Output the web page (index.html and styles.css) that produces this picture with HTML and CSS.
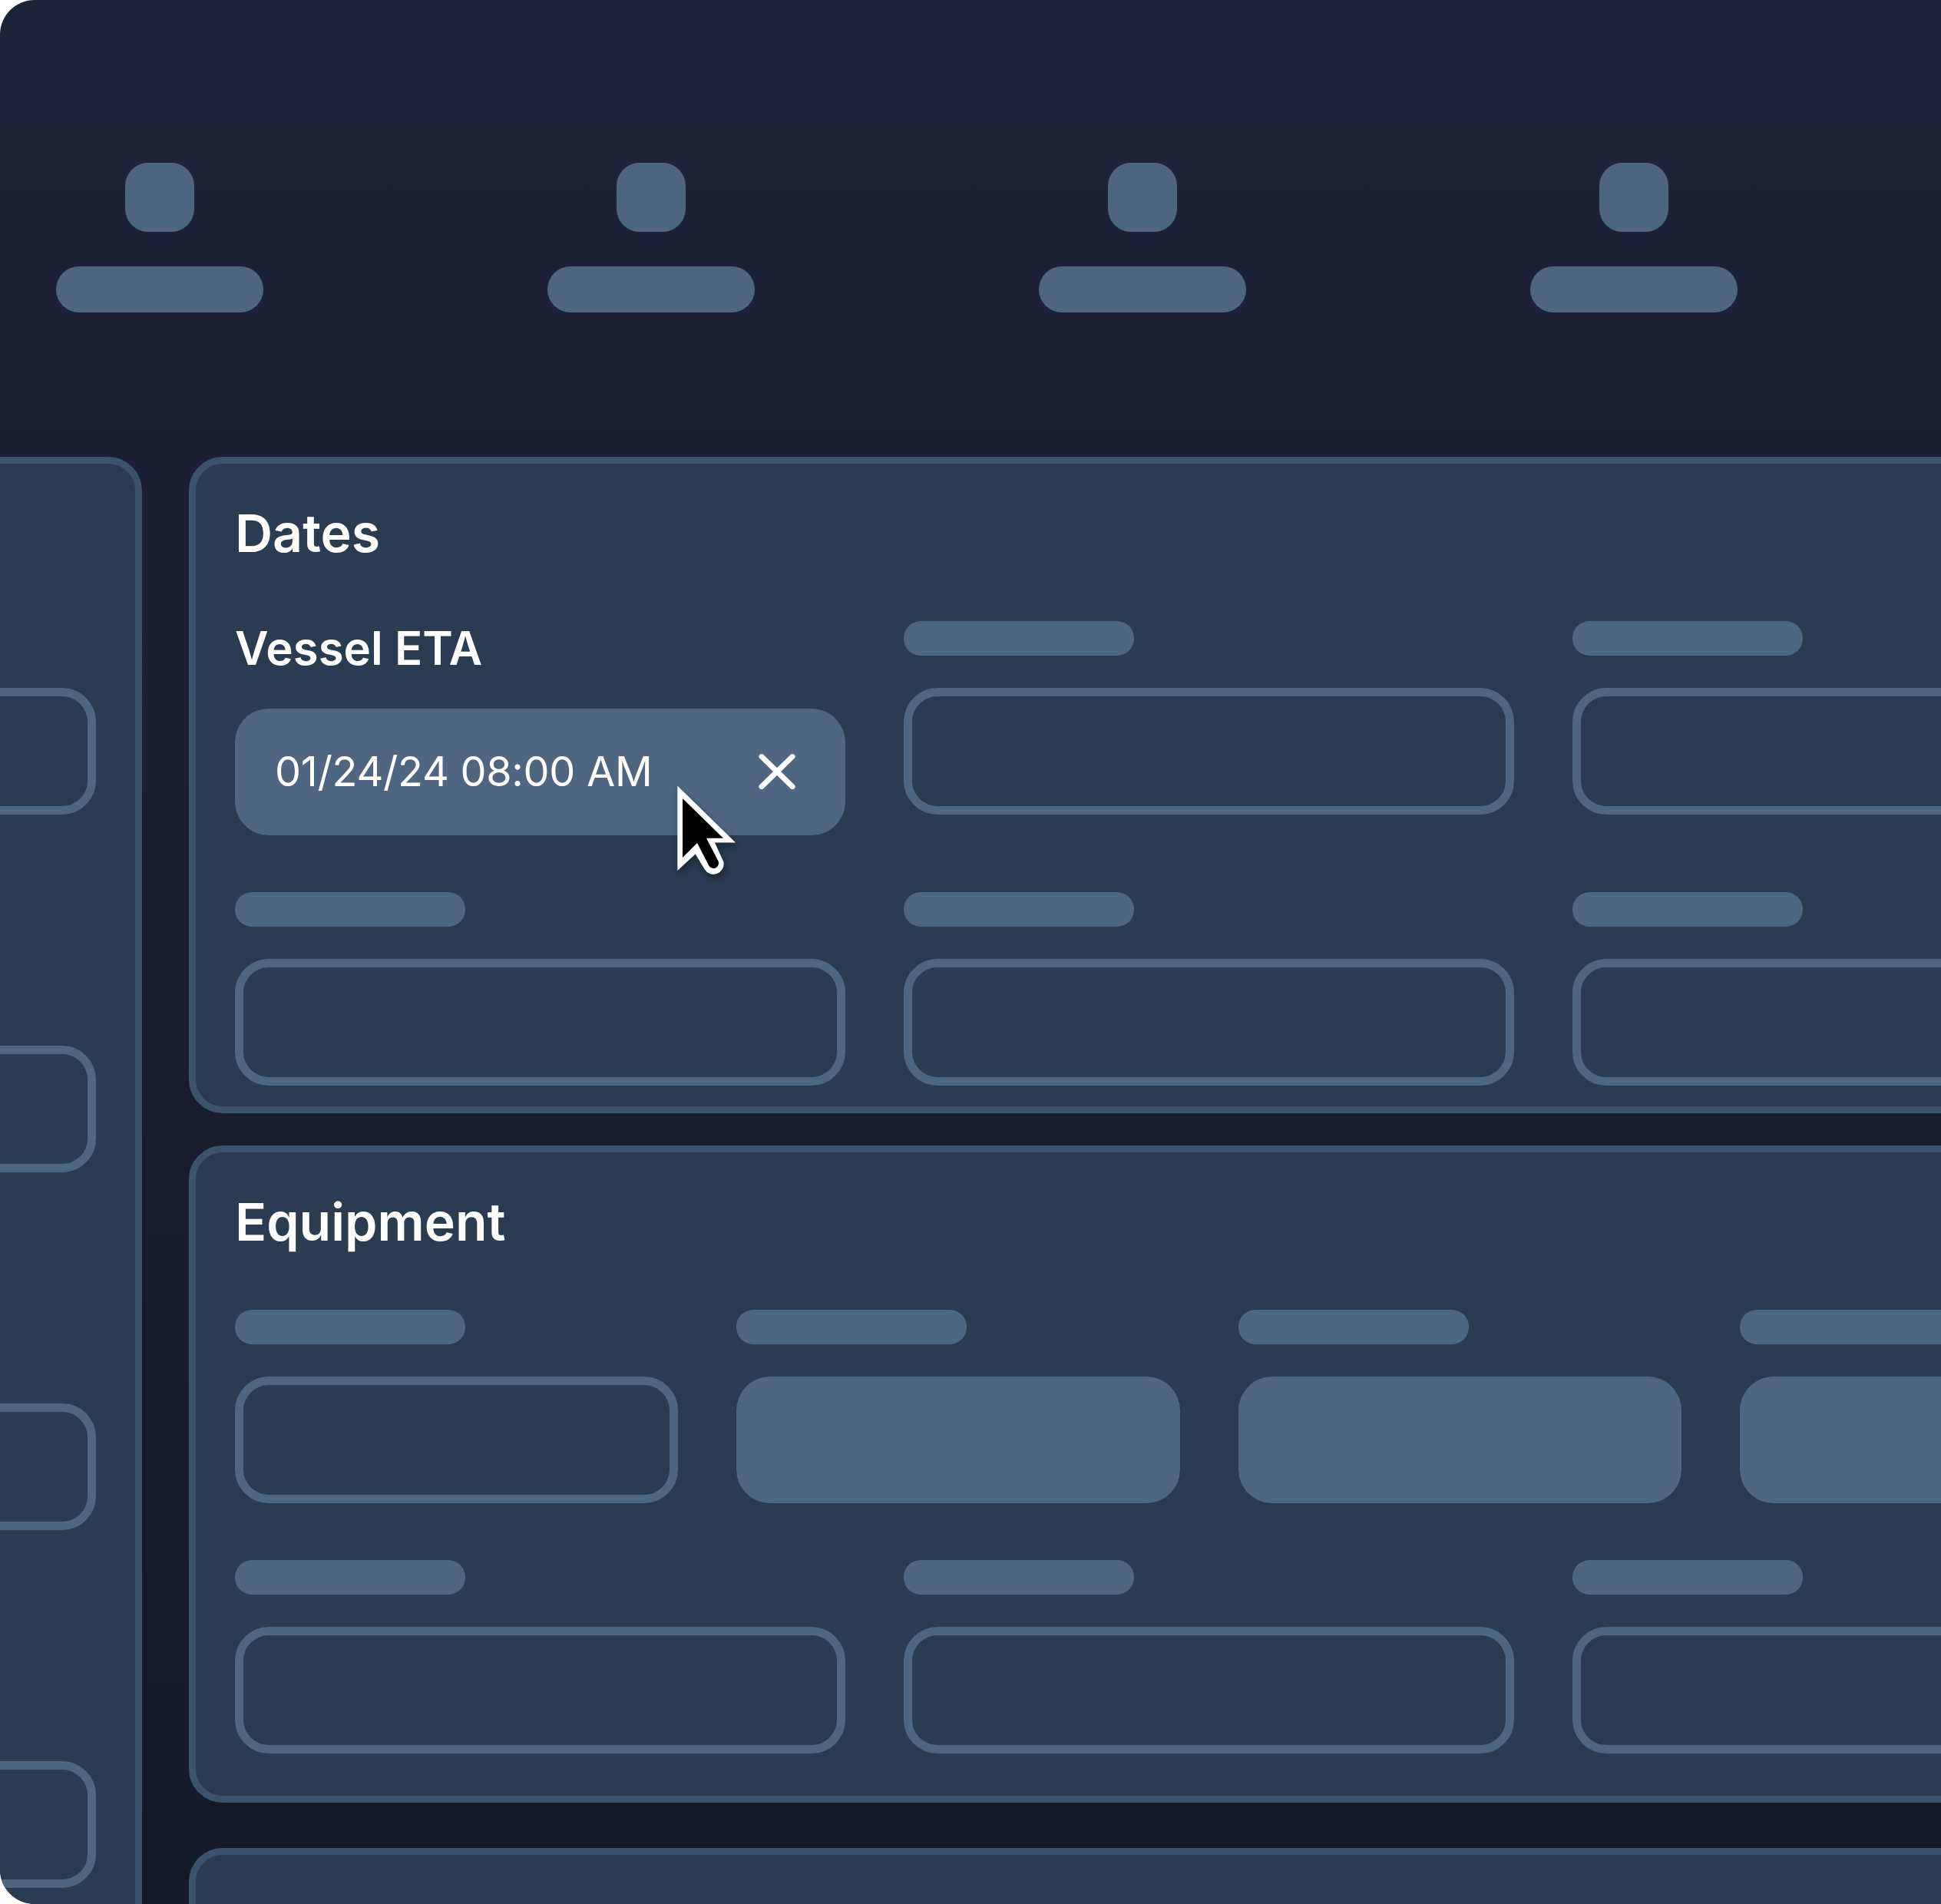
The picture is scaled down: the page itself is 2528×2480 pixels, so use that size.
FILE: index.html
```html
<!DOCTYPE html>
<html lang="en">
<head>
  <meta charset="UTF-8" />
  <title>Shipment details</title>
  <link rel="stylesheet" href="styles.css">
</head>
<body>
  <div class="frame">
    <div class="steps">
      <div class="step"><div class="step-icon"></div><div class="step-bar"></div></div>
      <div class="step"><div class="step-icon"></div><div class="step-bar"></div></div>
      <div class="step"><div class="step-icon"></div><div class="step-bar"></div></div>
      <div class="step"><div class="step-icon"></div><div class="step-bar"></div></div>
    </div>

    <div class="content">
      <div class="panel side">
        <div class="field-outline"></div>
        <div class="field-outline"></div>
        <div class="field-outline"></div>
        <div class="field-outline"></div>
      </div>

      <div class="main">
        <div class="panel panel-dates">
          <h2>Dates</h2>
          <div class="row row-3">
            <div class="col">
              <div class="label-text">Vessel ETA</div>
              <div class="field-chip">
                <span>01/24/24 08:00 AM</span>
                <svg class="clear-icon" viewBox="0 0 48 46" width="48" height="46">
                  <path d="M4 3.5 44 42.5M44 3.5 4 42.5" />
                </svg>
                <svg class="cursor" viewBox="0 0 140 170" width="140" height="170">
                  <path class="cursor-edge" d="M42.3 43.5V154L65.7 132.5 77.5 152A13.5 13.5 0 0 0 102.5 143L91 117.5H118Z" />
                  <path class="cursor-fill" d="M49 60V137L68 118 83 147A6.8 6.8 0 0 0 95.5 141.5L80 111.7H102Z" />
                </svg>
              </div>
            </div>
            <div class="col"><div class="label-bar"></div><div class="field-outline"></div></div>
            <div class="col"><div class="label-bar"></div><div class="field-outline"></div></div>
          </div>
          <div class="row row-3">
            <div class="col"><div class="label-bar"></div><div class="field-outline"></div></div>
            <div class="col"><div class="label-bar"></div><div class="field-outline"></div></div>
            <div class="col"><div class="label-bar"></div><div class="field-outline"></div></div>
          </div>
        </div>

        <div class="panel panel-equipment">
          <h2>Equipment</h2>
          <div class="row row-4">
            <div class="col"><div class="label-bar"></div><div class="field-outline"></div></div>
            <div class="col"><div class="label-bar"></div><div class="field-solid"></div></div>
            <div class="col"><div class="label-bar"></div><div class="field-solid"></div></div>
            <div class="col"><div class="label-bar"></div><div class="field-solid"></div></div>
          </div>
          <div class="row row-3">
            <div class="col"><div class="label-bar"></div><div class="field-outline"></div></div>
            <div class="col"><div class="label-bar"></div><div class="field-outline"></div></div>
            <div class="col"><div class="label-bar"></div><div class="field-outline"></div></div>
          </div>
        </div>

        <div class="panel panel-last"></div>
      </div>
    </div>
  </div>
</body>
</html>
```

FILE: styles.css
```css
* { box-sizing: border-box; }
body { margin: 0; background: #ffffff; font-family: 'Inter', sans-serif; }

.frame {
  width: 2528px; height: 2480px; overflow: hidden;
  border-radius: 45px 0 0 45px;
  background: linear-gradient(180deg, #1d2439 0%, #1a2033 30%, #131a28 100%);
}

.steps { display: flex; gap: 370px; height: 595px; padding: 212px 0 0 73px; }
.step { display: flex; flex-direction: column; align-items: center; gap: 45px; width: 270px; }
.step-icon { width: 90px; height: 90px; border-radius: 30px; background: #4e6680; }
.step-bar { width: 270px; height: 60px; border-radius: 30px; background: #4e6680; }

.content { display: flex; gap: 61px; align-items: flex-start; margin-left: -200px; }
.main { display: flex; flex-direction: column; width: 2657px; flex: none; }

.panel {
  background: #293c51; border: 9px solid #3c536c; border-radius: 44px;
  padding: 51px 51px 55px;
}
.side {
  width: 385px; height: 2000px; flex: none;
  padding-top: 292px;
  display: flex; flex-direction: column; gap: 301px;
}
.panel-dates { padding-bottom: 27px; margin-bottom: 42px; }
.panel-equipment { margin-bottom: 59px; }
.panel-last { height: 400px; }

h2 {
  margin: 0 0 74px; height: 80px;
  font-size: 68px; line-height: 78px; font-weight: 600; color: #ffffff;
}

.row { display: grid; gap: 76px; }
.row + .row { margin-top: 74px; }
.row-3 { grid-template-columns: repeat(3, 1fr); }
.row-4 { grid-template-columns: repeat(4, 1fr); }

.label-bar { width: 300px; height: 45px; border-radius: 22px; background: #4e6680; margin-bottom: 42px; }
.label-text { height: 72px; margin-bottom: 42px; font-size: 60px; line-height: 70px; font-weight: 600; color: #ffffff; }

.field-outline { height: 165px; border: 11px solid #4e6680; border-radius: 44px; flex: none; }
.field-solid { height: 165px; border-radius: 44px; background: #4e6680; }

.field-chip {
  position: relative;
  display: flex; justify-content: space-between; align-items: center;
  height: 165px; padding: 0 65px 2px 52px;
  border-radius: 44px; background: #4e6680;
  font-size: 54px; color: #ffffff; letter-spacing: -0.3px;
}
.clear-icon path { fill: none; stroke: #ffffff; stroke-width: 7; stroke-linecap: round; }

.cursor { position: absolute; left: 534px; top: 57px; filter: drop-shadow(2px 5px 5px rgba(0, 0, 0, 0.35)); }
.cursor-edge { fill: #ffffff; }
.cursor-fill { fill: #000000; }
```
